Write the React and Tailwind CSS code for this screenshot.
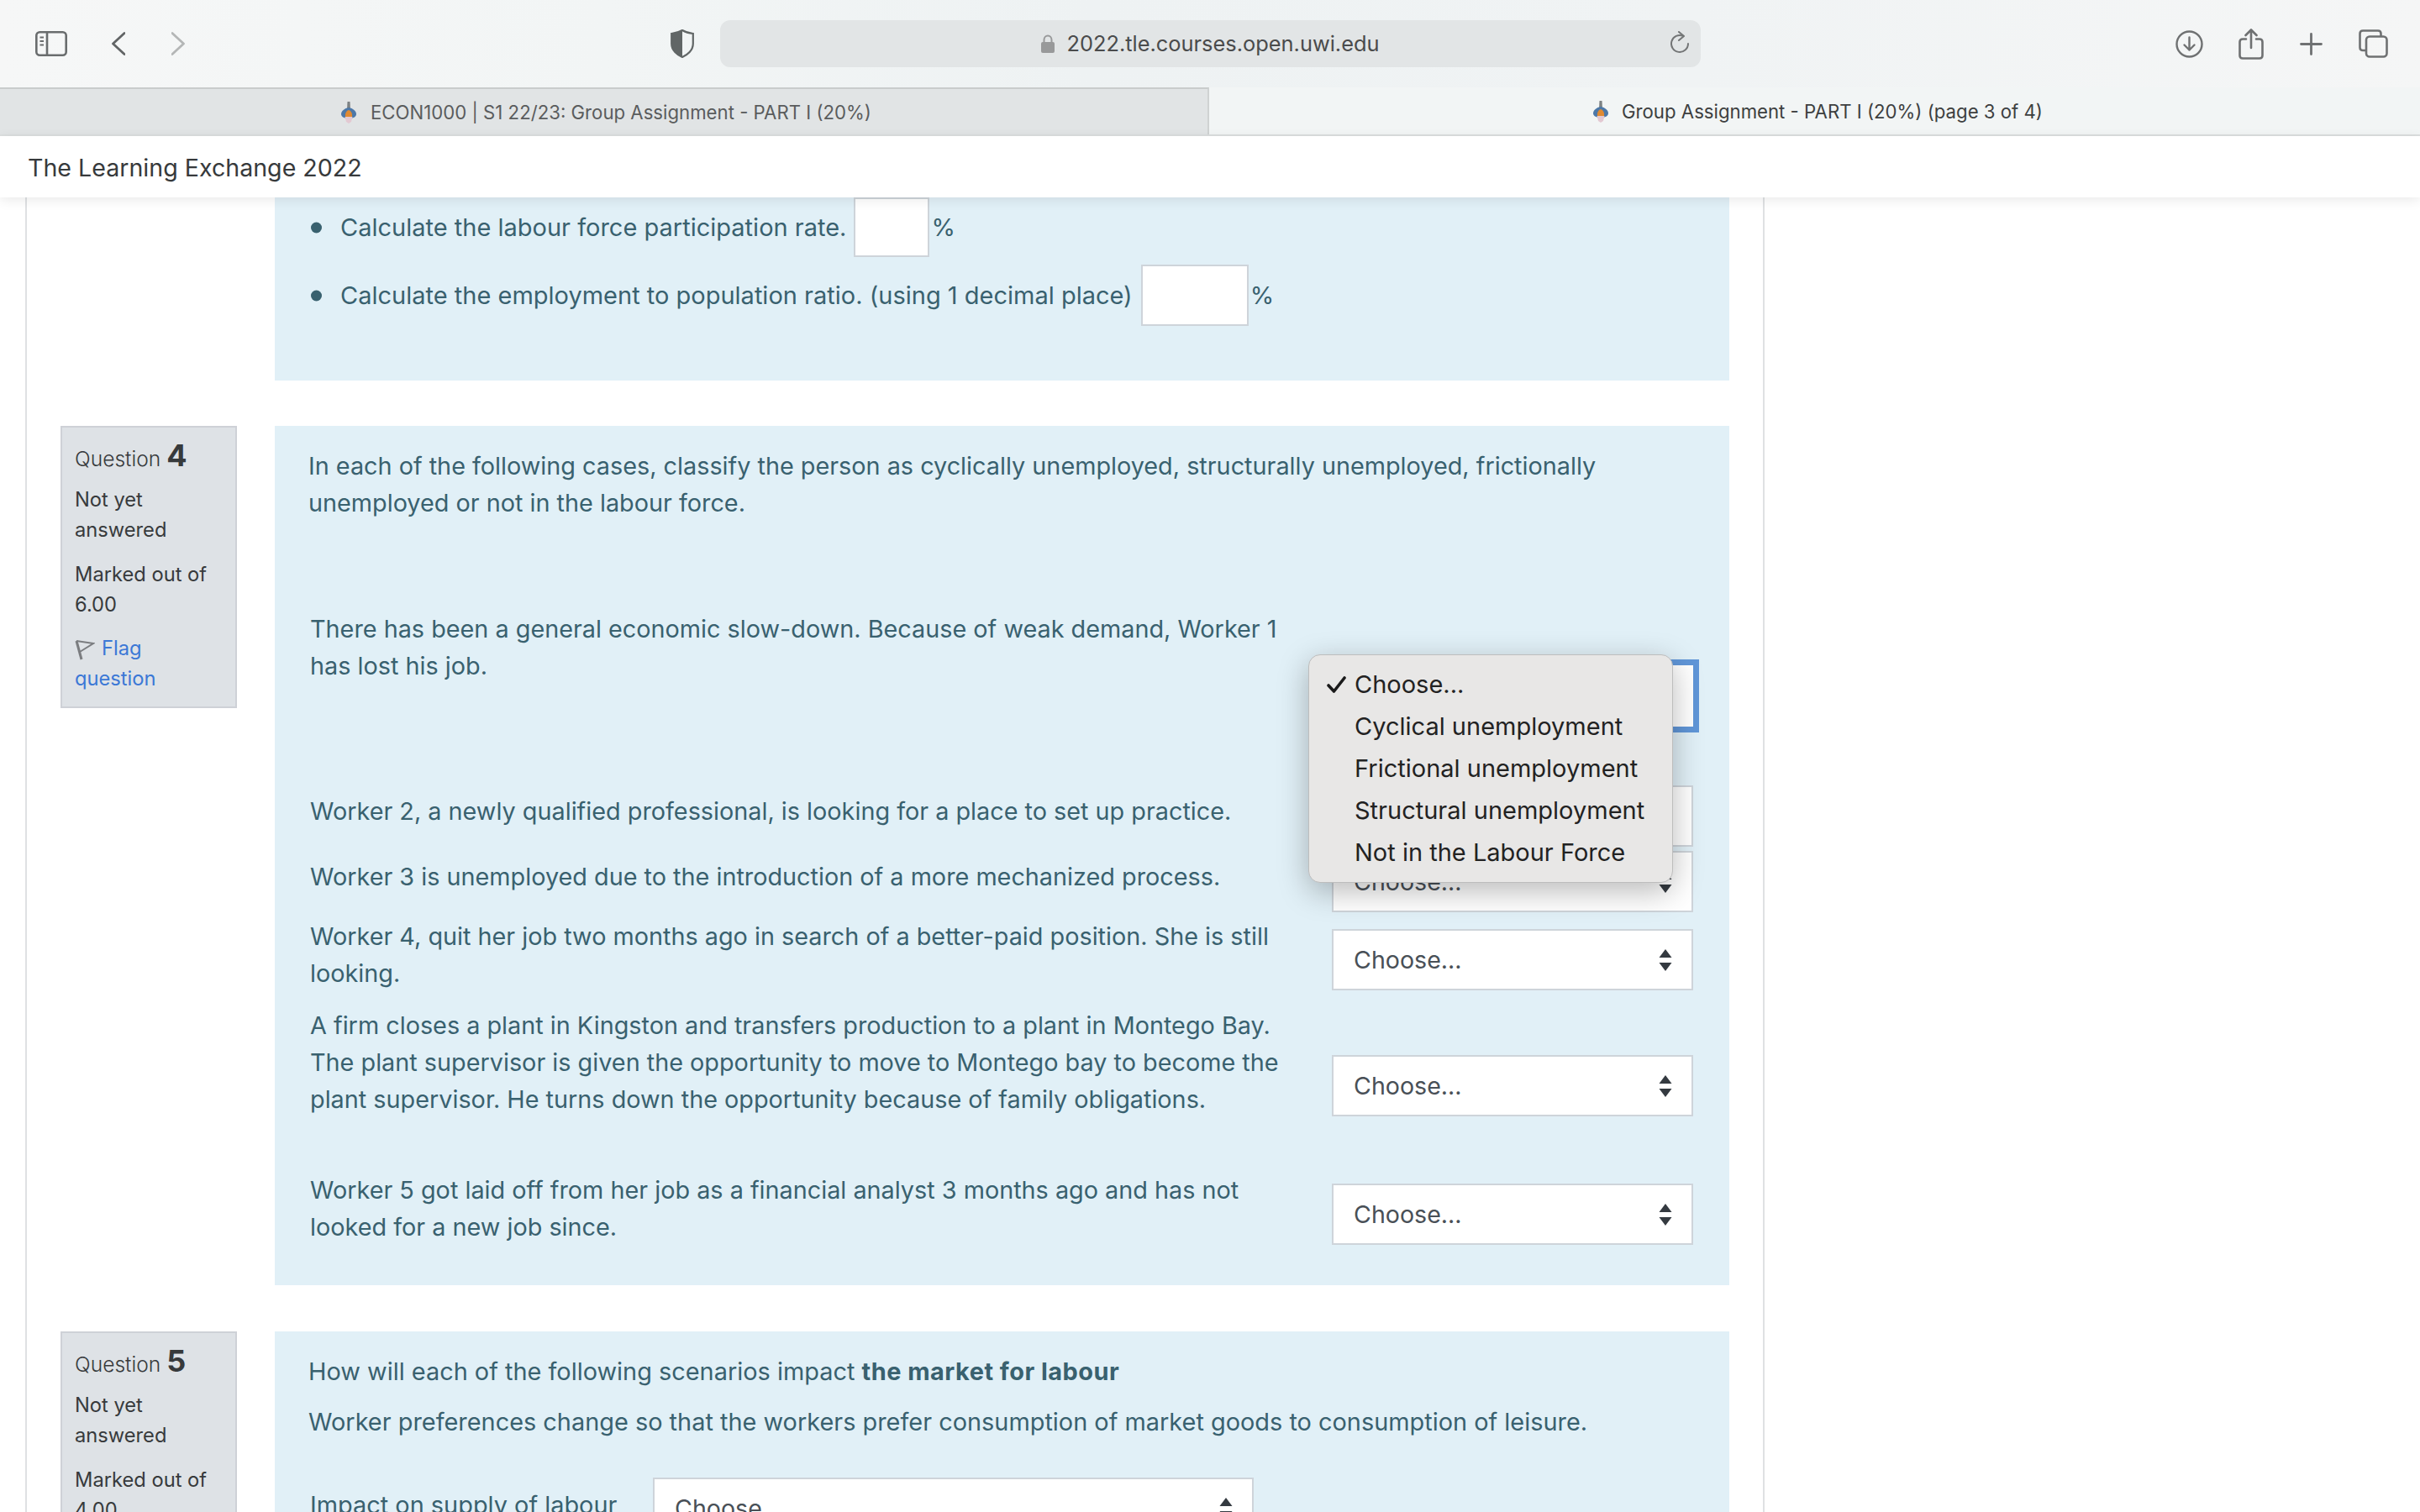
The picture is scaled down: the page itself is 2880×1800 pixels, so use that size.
import React from 'react';

const Favicon = ({ className }) => (
    <svg className={className} viewBox="0 0 18 26" fill="none">
        <path d="M7.5 0 H10.5 L11 9 H7 Z" fill="#7d8284" />
        <path d="M9 7 C14 8 18 11 18 15 C18 18 14 20 9 20 C4 20 0 18 0 15 C0 11 4 8 9 7 Z" fill="#4d78a8" />
        <path d="M9 10 C12 11 13.5 14 13 18 L5 18 C4.5 14 6 11 9 10 Z" fill="#e08a32" />
        <path d="M4.5 18 L13.5 18 L12 24 L9 26 L6 24 Z" fill="#e3c9d2" />
    </svg>
);

// up / down triangles drawn by every select
const SelectArrows = () => (
    <svg className="w-[16px] h-[26px] shrink-0" viewBox="0 0 16 26">
        <path d="M8 0 L15.5 10 L0.5 10 Z" fill="#343a40" />
        <path d="M8 26 L15.5 16 L0.5 16 Z" fill="#343a40" />
    </svg>
);

const Select = ({ className = '', children }) => (
    <div className={`relative h-[73px] bg-white border-2 border-[#ced4da] flex items-center justify-between pl-[24px] pr-[23px] text-[28.6px] text-[#495057] ${className}`}>
        <span>Choose...</span>
        <SelectArrows />
        {children}
    </div>
);

const InfoBox = ({ num, marks }) => (
    <div className="w-[210px] h-[336px] shrink-0 bg-[#dee2e6] border-2 border-[#ced1d7] pl-[15px] pt-[10px] text-[23.7px] leading-[36px] text-[#373a3c]">
        <div className="h-[58px] leading-[46px] text-[24.6px] font-light">
            Question <span className="text-[36px] font-bold">{num}</span>
        </div>
        <div>Not yet<br />answered</div>
        <div className="mt-[17px]">Marked out of<br />{marks}</div>
        <div className="mt-[16px] text-[#3b78d6]">
            <svg className="inline-block w-[24px] h-[25px] mr-[8px] align-[-6px]" viewBox="0 0 24 25" fill="none" stroke="#7b7d80" strokeWidth="2">
                <path d="M2 2 L8 24" strokeWidth="3" />
                <path d="M2 2 L22 5 L6 15" />
            </svg>
            Flag<br />question
        </div>
    </div>
);

const MenuItem = ({ checked, children }) => (
    <div className="h-[50px] flex items-center">
        <div className="w-[54px] pl-[21px] shrink-0">
            {checked && (
                <svg className="w-[23px] h-[20px]" viewBox="0 0 23 20" fill="none" stroke="#1a1a1a" strokeWidth="3.6" strokeLinecap="round" strokeLinejoin="round">
                    <path d="M2 11 L8.5 18 L21 2" />
                </svg>
            )}
        </div>
        <span>{children}</span>
    </div>
);

const Bullet = () => <span className="w-[13px] h-[13px] rounded-full bg-[#39616f] absolute -left-[35px] top-1/2 -translate-y-1/2" />;

const rows = [
    { text: <>There has been a general economic slow-down. Because of weak demand, Worker 1 has lost his job.</>, row: 'h-[217px]', sel: 'mt-[65px] outline-[7px] outline-[#6096d8] border-transparent', open: true },
    { text: <>Worker 2, a newly qualified professional, is looking for a place to set up practice.</>, row: 'h-[78px]', sel: '-mt-[9px]' },
    { text: <>Worker 3 is unemployed due to the introduction of a more mechanized process.</>, row: 'h-[71px]', sel: '-mt-[9px]' },
    { text: <>Worker 4, quit her job two months ago in search of a better-paid position. She is still looking.</>, row: 'h-[106px]', sel: 'mt-[13px]' },
    { text: <>A firm closes a plant in Kingston and transfers production to a plant in Montego Bay. The plant supervisor is given the opportunity to move to Montego bay to become the plant supervisor. He turns down the opportunity because of family obligations.</>, row: 'h-[196px]', sel: 'mt-[57px]' },
    { text: <>Worker 5 got laid off from her job as a financial analyst 3 months ago and has not looked for a new job since.</>, row: 'h-[135px]', sel: 'mt-[14px]' },
];

export default function App() {
    return (
        <div className="h-[1800px] overflow-hidden bg-white flex flex-col font-['Inter',sans-serif]">
            {/* browser toolbar */}
            <div className="h-[104px] shrink-0 flex items-center bg-[linear-gradient(90deg,#f6f7f7_0%,#f2f5f5_25%,#eef2f3_45%,#f0f3f4_70%,#f5f6f6_100%)]">
                <svg className="ml-[42px] w-[38px] h-[30px]" viewBox="0 0 38 30" fill="none" stroke="#6a6d6e" strokeWidth="2.6">
                    <rect x="1.3" y="1.3" width="35.4" height="27.4" rx="4" />
                    <path d="M14 1.3 V28.7" />
                    <path d="M5.5 7.5 H10 M5.5 12 H10 M5.5 16.5 H10" strokeWidth="2" />
                </svg>
                <svg className="ml-[53px] w-[16px] h-[28px]" viewBox="0 0 16 28" fill="none" stroke="#616465" strokeWidth="2.8" strokeLinecap="round" strokeLinejoin="round">
                    <path d="M15 1.5 L1.5 14 L15 26.5" />
                </svg>
                <svg className="ml-[55px] w-[16px] h-[28px]" viewBox="0 0 16 28" fill="none" stroke="#b4b6b6" strokeWidth="2.8" strokeLinecap="round" strokeLinejoin="round">
                    <path d="M1 1.5 L14.5 14 L1 26.5" />
                </svg>
                <svg className="ml-[578px] w-[28px] h-[34px]" viewBox="0 0 28 34" fill="none">
                    <path d="M14 1 C18 3.5 22 4.5 26.8 5 V17 C26.8 25 20 30.5 14 33 C8 30.5 1.2 25 1.2 17 V5 C6 4.5 10 3.5 14 1 Z" stroke="#616666" strokeWidth="2.2" />
                    <path d="M14 1 C10 3.5 6 4.5 1.2 5 V17 C1.2 25 8 30.5 14 33 Z" fill="#616666" />
                </svg>
                <div className="ml-[31px] w-[1167px] h-[56px] rounded-[12px] bg-[#e2e5e6] relative flex items-center justify-center">
                    <svg className="w-[16px] h-[22px] mr-[14px]" viewBox="0 0 16 22" fill="none">
                        <path d="M3.5 10 V6.5 C3.5 3.5 5.5 1.5 8 1.5 C10.5 1.5 12.5 3.5 12.5 6.5 V10" stroke="#98999a" strokeWidth="2" />
                        <rect x="0" y="9" width="16" height="13" rx="2" fill="#98999a" />
                    </svg>
                    <span className="text-[25.4px] leading-[30px] -mt-[1px] text-[#4a4b4c]">2022.tle.courses.open.uwi.edu</span>
                    <svg className="absolute right-[14px] top-[13px] w-[22px] h-[26px]" viewBox="0 0 22 26" fill="none" stroke="#737576" strokeWidth="2" strokeLinecap="round" strokeLinejoin="round">
                        <path d="M15 5.8 A10 10 0 1 0 21 15" />
                        <path d="M10 1 L16 6 L10 11" />
                    </svg>
                </div>
                <div className="ml-auto mr-[38px] flex items-center">
                    <svg className="w-[33px] h-[33px]" viewBox="0 0 33 33" fill="none" stroke="#6f7172" strokeWidth="2.4" strokeLinecap="round" strokeLinejoin="round">
                        <circle cx="16.5" cy="16.5" r="15" />
                        <path d="M16.5 8.5 V23.5 M10.5 17.5 L16.5 23.5 L22.5 17.5" />
                    </svg>
                    <svg className="ml-[42px] w-[30px] h-[37px]" viewBox="0 0 30 37" fill="none" stroke="#6f7172" strokeWidth="2.6" strokeLinecap="round" strokeLinejoin="round">
                        <path d="M9 12.5 H5 Q1.5 12.5 1.5 16 V32 Q1.5 35.5 5 35.5 H25 Q28.5 35.5 28.5 32 V16 Q28.5 12.5 25 12.5 H21" />
                        <path d="M15 23 V2 M8.5 8 L15 1.5 L21.5 8" />
                    </svg>
                    <svg className="ml-[43px] w-[27px] h-[27px]" viewBox="0 0 27 27" fill="none" stroke="#6f7172" strokeWidth="2.8" strokeLinecap="round">
                        <path d="M13.5 1.5 V25.5 M1.5 13.5 H25.5" />
                    </svg>
                    <svg className="ml-[43px] w-[35px] h-[34px]" viewBox="0 0 35 34" fill="none" stroke="#6f7172" strokeWidth="2.6" strokeLinejoin="round">
                        <path d="M8 25 H5 Q1.5 25 1.5 21.5 V5 Q1.5 1.5 5 1.5 H23 Q26.5 1.5 26.5 5 V8" />
                        <rect x="9" y="8.5" width="24.5" height="24" rx="4" />
                    </svg>
                </div>
            </div>

            {/* tabs */}
            <div className="h-[58px] shrink-0 flex text-[22.2px] border-b-2 border-[#dcdfdf]">
                <div className="w-[1439px] bg-[#e1e4e5] border-t-2 border-r-2 border-t-[#c9cccc] border-r-[#cfd2d2] flex items-center justify-center text-[#5a5c5d] pl-[6px] pt-[1px]">
                    <Favicon className="w-[18px] h-[26px] mr-[17px]" />
                    <span>ECON1000 | S1 22/23: Group Assignment - PART I (20%)</span>
                </div>
                <div className="flex-1 bg-[#f2f5f5] flex items-center justify-center text-[#3d3f40] pl-[8px] pt-[1px]">
                    <Favicon className="w-[18px] h-[26px] mr-[16px]" />
                    <span>Group Assignment - PART I (20%) (page 3 of 4)</span>
                </div>
            </div>

            {/* site header */}
            <div className="h-[73px] shrink-0 bg-white relative z-10 flex items-center pl-[33px] pt-[3px] text-[28.6px] text-[#373a3c] shadow-[0_3px_14px_rgba(0,0,0,0.09)]">
                The Learning Exchange 2022
            </div>

            {/* page */}
            <div className="flex-1 min-h-0 overflow-hidden">
                <div className="ml-[30px] w-[2070px] min-h-full border-x-2 border-[#dfe1e3] pl-[40px] text-[28.8px] leading-[44px] text-[#39616f]">
                    {/* end of question 3 */}
                    <div className="ml-[255px] w-[1731px] h-[218px] bg-[#e1f0f7] pl-[78px] text-[29px]">
                        <div className="relative h-[71px] flex items-center">
                            <Bullet />
                            <span>Calculate the labour force participation rate.</span>
                            <div className="ml-[9px] w-[90px] h-full bg-white border-2 border-[#ced4da]" />
                            <span className="ml-[2px]">%</span>
                        </div>
                        <div className="relative mt-[9px] h-[73px] flex items-center">
                            <Bullet />
                            <span>Calculate the employment to population ratio. (using 1 decimal place)</span>
                            <div className="ml-[10px] w-[128px] h-full bg-white border-2 border-[#ced4da]" />
                            <span className="ml-[2px]">%</span>
                        </div>
                    </div>

                    {/* question 4 */}
                    <div className="mt-[54px] flex items-start">
                        <InfoBox num="4" marks="6.00" />
                        <div className="ml-[45px] w-[1731px] h-[1023px] bg-[#e1f0f7] pl-[40px] pt-[26px]">
                            <p className="w-[1640px]">In each of the following cases, classify the person as cyclically unemployed, structurally unemployed, frictionally unemployed or not in the labour force.</p>
                            <div className="mt-[106px] pl-[2px]">
                                {rows.map((r, i) => (
                                    <div key={i} className={`flex items-start ${r.row}`}>
                                        <div className="w-[1216px] shrink-0 pr-[44px]">{r.text}</div>
                                        <Select className={`w-[430px] ${r.sel}`}>
                                            {r.open && (
                                                <div className="absolute -left-[30px] -top-[15px] w-[434px] h-[272px] z-20 rounded-[14px] bg-[#e8e7e6] border border-[#bdbdbd] pt-[10px] text-[29px] text-[#222222] shadow-[0_10px_36px_rgba(0,0,0,0.28)]">
                                                    <MenuItem checked>Choose...</MenuItem>
                                                    <MenuItem>Cyclical unemployment</MenuItem>
                                                    <MenuItem>Frictional unemployment</MenuItem>
                                                    <MenuItem>Structural unemployment</MenuItem>
                                                    <MenuItem>Not in the Labour Force</MenuItem>
                                                </div>
                                            )}
                                        </Select>
                                    </div>
                                ))}
                            </div>
                        </div>
                    </div>

                    {/* question 5 */}
                    <div className="mt-[55px] flex items-start">
                        <InfoBox num="5" marks="4.00" />
                        <div className="ml-[45px] w-[1731px] h-[400px] bg-[#e1f0f7] pl-[40px] pt-[26px] text-[28.9px]">
                            <p>How will each of the following scenarios impact <strong className="font-bold tracking-[0.5px]">the market for labour</strong></p>
                            <p className="mt-[16px]">Worker preferences change so that the workers prefer consumption of market goods to consumption of leisure.</p>
                            <div className="mt-[44px] pl-[2px] flex items-start">
                                <div className="w-[408px] shrink-0 mt-[11px]">Impact on supply of labour</div>
                                <Select className="w-[715px]" />
                            </div>
                        </div>
                    </div>
                </div>
            </div>
        </div>
    );
}
